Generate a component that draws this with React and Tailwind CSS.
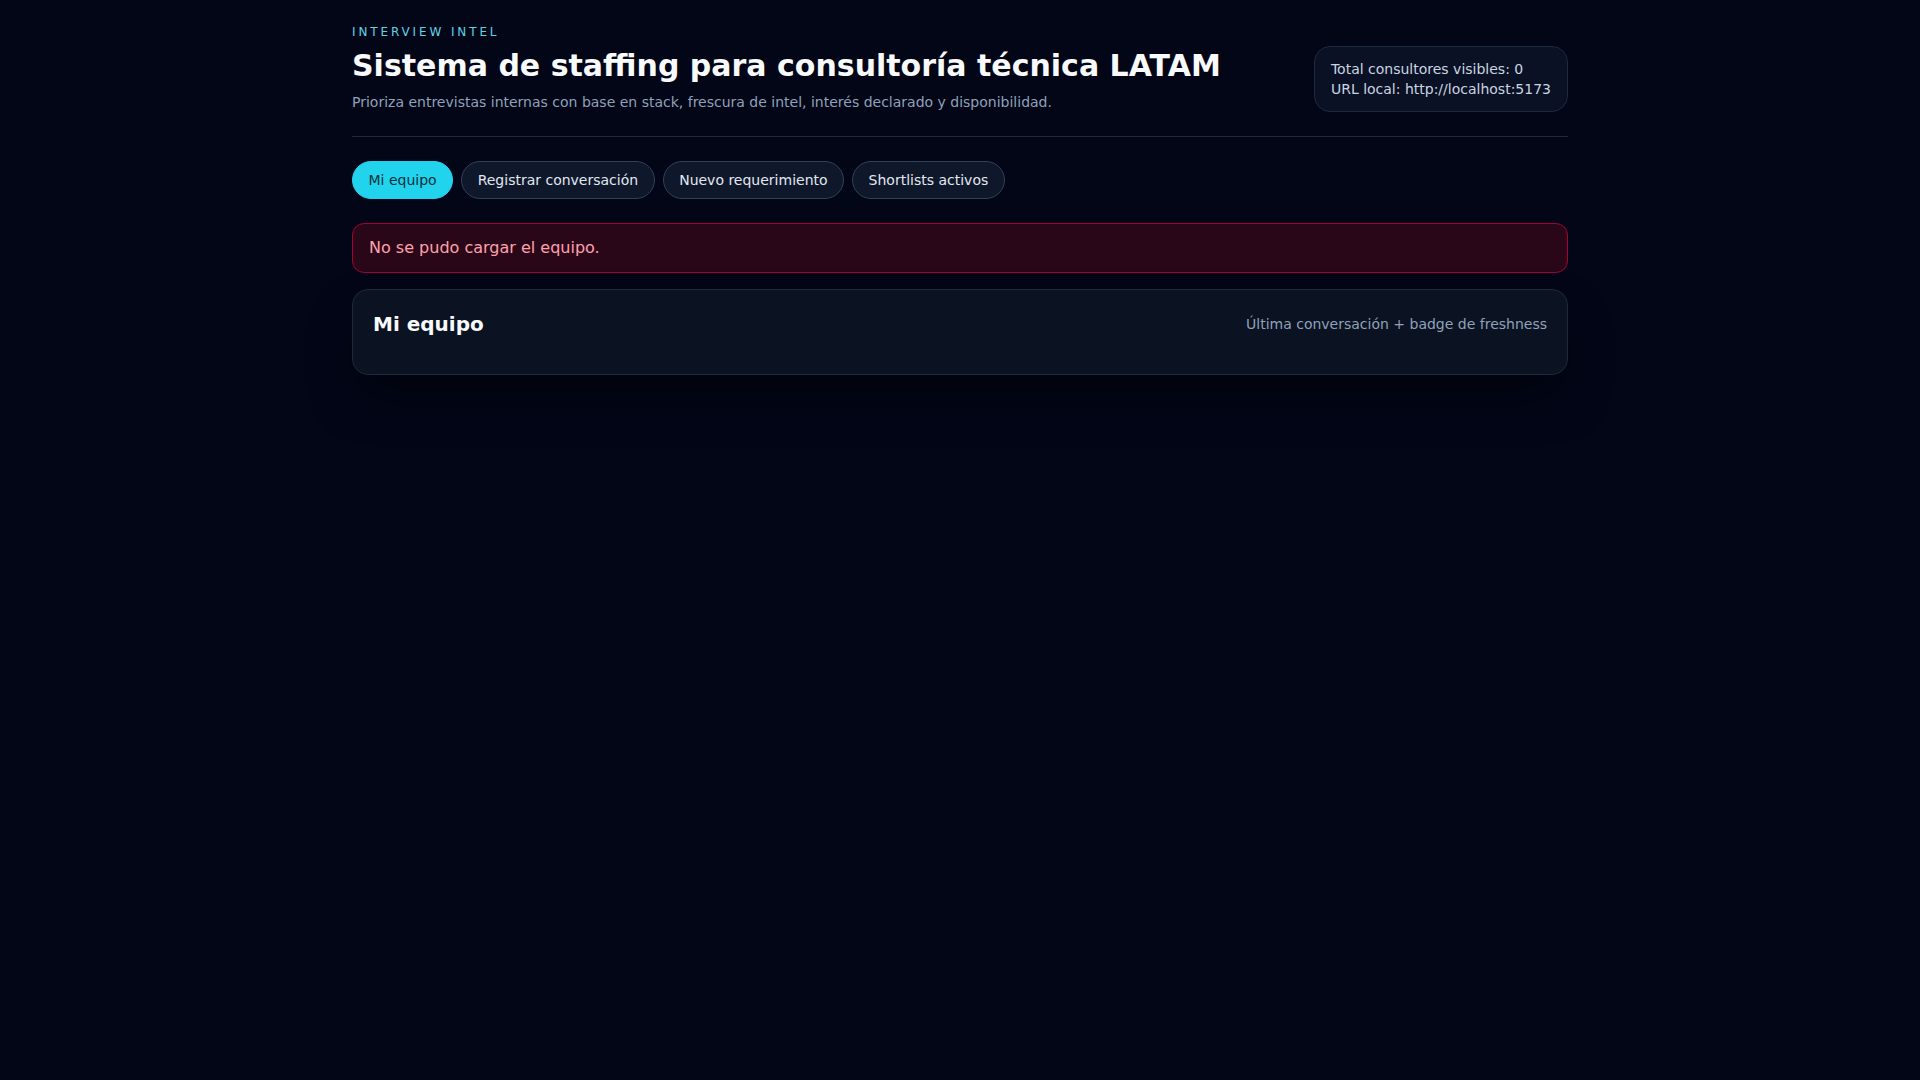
import React from "react";

const tabs = ["Mi equipo", "Registrar conversación", "Nuevo requerimiento", "Shortlists activos"];

export default function App() {
  return (
    <div className="min-h-screen bg-[#020617] text-slate-100" style={{ fontFamily: '"DejaVu Sans", sans-serif' }}>
      <div className="mx-auto max-w-7xl px-8 pt-6">
        <header className="flex items-end justify-between border-b border-slate-800 pb-6">
          <div>
            <p className="text-xs uppercase tracking-[0.24em] text-[#5fd3e6]">Interview Intel</p>
            <h1 className="mt-2 text-3xl font-bold text-slate-50">Sistema de staffing para consultoría técnica LATAM</h1>
            <p className="mt-2 text-sm text-slate-400">
              Prioriza entrevistas internas con base en stack, frescura de intel, interés declarado y disponibilidad.
            </p>
          </div>
          <div className="rounded-2xl border border-slate-800 bg-slate-900/70 px-4 py-3 text-sm text-slate-300">
            <p>Total consultores visibles: 0</p>
            <p>URL local: http://localhost:5173</p>
          </div>
        </header>

        <nav className="mt-6 flex gap-2">
          {tabs.map((t, i) => (
            <button
              key={t}
              className={
                i === 0
                  ? "rounded-full border border-[#22d3ee] bg-[#22d3ee] px-[15.5px] py-2 text-sm text-[#082f3a]"
                  : "rounded-full border border-slate-700 bg-slate-900 px-[15.5px] py-2 text-sm text-slate-200"
              }
            >
              {t}
            </button>
          ))}
        </nav>

        <div className="mt-6 rounded-xl border border-rose-800 bg-[#2a0718] px-4 py-3 text-rose-300">
          No se pudo cargar el equipo.
        </div>

        <section className="mt-4 rounded-2xl border border-slate-800 bg-[#0b1222] p-5 shadow-2xl shadow-black/60">
          <div className="flex items-center justify-between">
            <h2 className="text-xl font-bold text-slate-50">Mi equipo</h2>
            <p className="text-sm text-slate-400">Última conversación + badge de freshness</p>
          </div>
          <div className="mt-4"></div>
        </section>
      </div>
    </div>
  );
}
